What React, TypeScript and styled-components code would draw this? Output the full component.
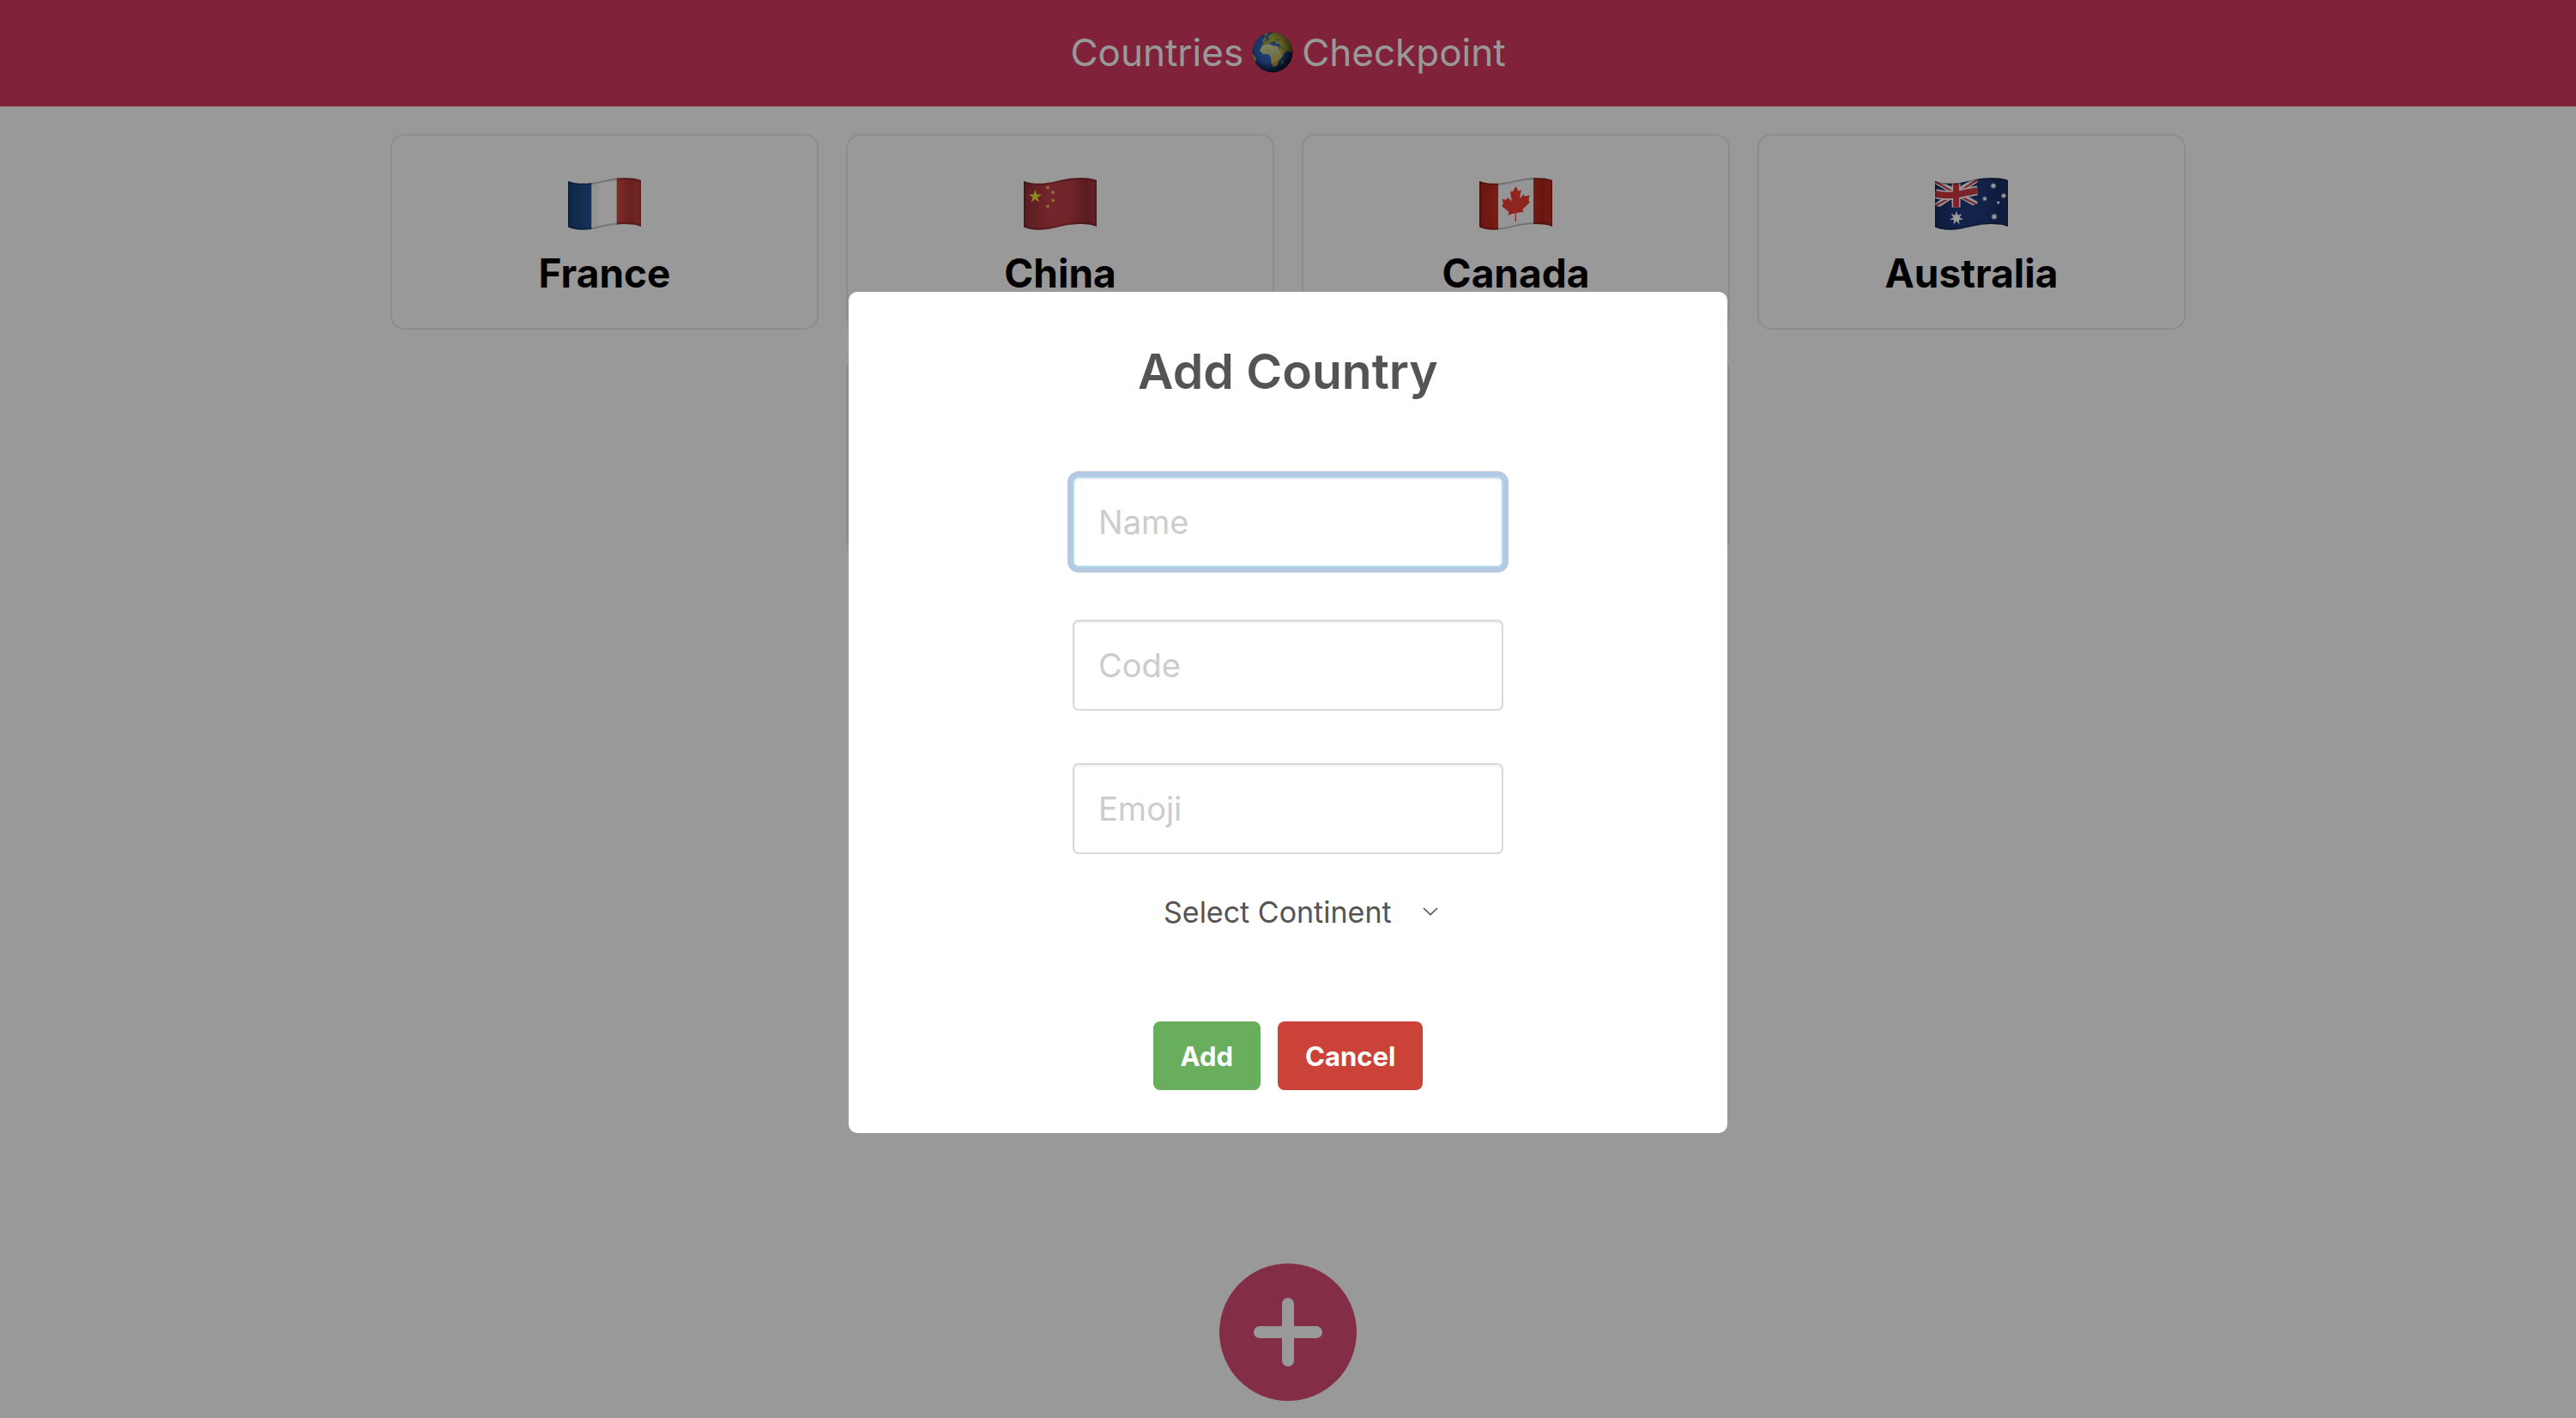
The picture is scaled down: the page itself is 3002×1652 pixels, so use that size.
import React from 'react';
import styled, { createGlobalStyle } from 'styled-components';

const GlobalStyle = createGlobalStyle`
  *, *::before, *::after { box-sizing: border-box; }
  body {
    margin: 0;
    background: #ffffff;
    color: #000000;
    font-family: Inter, "Liberation Sans", sans-serif;
  }
  h1, h2, p { margin: 0; }
  button, input, select { font-family: inherit; }
`;

const Page = styled.div`
  min-height: 100vh;
`;

const Header = styled.header`
  display: flex;
  justify-content: center;
  padding: 32px 0 34px;
  background: #d53961;
`;

const HeaderTitle = styled.h1`
  display: flex;
  align-items: center;
  gap: 10px;
  color: #ffffff;
  font-size: 44px;
  font-weight: 400;
  line-height: 58px;
`;

const CountryGrid = styled.main`
  display: grid;
  grid-template-columns: repeat(4, 1fr);
  gap: 32px;
  max-width: 2156px;
  margin: 0 auto;
  padding: 32px;
`;

const Card = styled.article`
  display: flex;
  flex-direction: column;
  align-items: center;
  padding: 32px 16px;
  border: 2px solid #e9e9e9;
  border-radius: 16px;
`;

const FlagBox = styled.div`
  display: flex;
  align-items: center;
  height: 96px;
`;

const CountryName = styled.h2`
  font-size: 46px;
  font-weight: 700;
  line-height: 64px;
`;

const DetailPanel = styled.section`
  grid-column: 2 / 4;
  min-height: 228px;
  border: 4px solid #e9e9e9;
  border-radius: 16px;
`;

const FloatingButton = styled.button`
  position: fixed;
  bottom: 20px;
  left: 50%;
  margin-left: -80px;
  display: grid;
  place-items: center;
  width: 160px;
  height: 160px;
  padding: 0;
  border: 0;
  border-radius: 50%;
  background: #dc4b76;
  color: #ffffff;
`;

const Overlay = styled.div`
  position: fixed;
  inset: 0;
  display: flex;
  align-items: center;
  justify-content: center;
  padding: 28px 20px 20px;
  background: rgba(0, 0, 0, 0.4);
`;

const Modal = styled.form`
  display: flex;
  flex-direction: column;
  align-items: center;
  width: 1024px;
  max-width: 100%;
  padding: 50px;
  border-radius: 10px;
  background: #ffffff;
  color: #545454;
`;

const ModalTitle = styled.h2`
  font-size: 57px;
  font-weight: 600;
  line-height: 86px;
`;

const Fields = styled.div`
  display: flex;
  flex-direction: column;
  gap: 61px;
  margin-top: 79px;
`;

const TextInput = styled.input`
  display: block;
  width: 502px;
  height: 106px;
  padding: 0 28px;
  border: 2px solid #d9d9d9;
  border-radius: 7px;
  outline: none;
  background: #ffffff;
  box-shadow: inset 0 2px 2px rgba(0, 0, 0, 0.06);
  color: #545454;
  font-size: 38px;

  &::placeholder {
    color: #cccccc;
    opacity: 1;
  }

  &:focus {
    border-color: #b4dbed;
    box-shadow: inset 0 2px 2px rgba(0, 0, 0, 0.06), 0 0 0 6px #b5c9e2;
  }
`;

const SelectWrap = styled.div`
  display: grid;
  align-items: center;
  margin-top: 27px;
  color: #545454;

  > * {
    grid-area: 1 / 1;
  }

  > svg {
    justify-self: end;
    margin-right: 10px;
    pointer-events: none;
  }
`;

const Select = styled.select`
  appearance: none;
  height: 80px;
  padding: 0 64px 0 40px;
  border: 0;
  background: transparent;
  color: inherit;
  font-size: 34px;
`;

const Actions = styled.div`
  display: flex;
  gap: 20px;
  margin-top: 88px;
`;

const ActionButton = styled.button<{ $color: string }>`
  height: 80px;
  padding: 0 32px;
  border: 0;
  border-radius: 8px;
  background: ${(p) => p.$color};
  color: #ffffff;
  font-size: 31px;
  font-weight: 700;
`;

const FLAG_SHAPE =
  'M0 4C8 7 17 7.6 28 6C42 4 50 .3 65 .3C73 .3 80 1 85 3V57C80 54.6 73 54 65 54C50 54 40 58 28 60C17 61.5 8 61 0 57.5Z';

function starPoints(cx: number, cy: number, outer: number, tips: number, ratio: number, turn = 0) {
  return Array.from({ length: tips * 2 }, (_, i) => {
    const r = i % 2 ? outer * ratio : outer;
    const a = (Math.PI * i) / tips - Math.PI / 2 + turn;
    return `${(cx + r * Math.cos(a)).toFixed(2)},${(cy + r * Math.sin(a)).toFixed(2)}`;
  }).join(' ');
}

function WavingFlag({ id, label, children }: { id: string; label: string; children: React.ReactNode }) {
  return (
    <svg width="86" height="62" viewBox="0 0 86 62" role="img" aria-label={label}>
      <defs>
        <clipPath id={`${id}-clip`}>
          <path d={FLAG_SHAPE} />
        </clipPath>
        <linearGradient id={`${id}-fold`}>
          <stop offset="0" stopColor="#000" stopOpacity=".22" />
          <stop offset=".35" stopColor="#000" stopOpacity="0" />
          <stop offset=".62" stopColor="#000" stopOpacity=".02" />
          <stop offset=".86" stopColor="#000" stopOpacity=".22" />
          <stop offset="1" stopColor="#000" stopOpacity=".08" />
        </linearGradient>
        <filter id={`${id}-soft`}>
          <feGaussianBlur stdDeviation="1" />
        </filter>
      </defs>
      <g clipPath={`url(#${id}-clip)`}>
        {children}
        <path d={FLAG_SHAPE} fill="none" stroke="#000" strokeOpacity=".5" strokeWidth="2" filter={`url(#${id}-soft)`} />
      </g>
    </svg>
  );
}

function Fold({ id }: { id: string }) {
  return <rect width="86" height="62" fill={`url(#${id}-fold)`} />;
}

function FranceFlag() {
  return (
    <WavingFlag id="fr" label="Flag of France">
      <rect width="27.5" height="62" fill="#25559a" />
      <rect x="56.5" width="30" height="62" fill="#dc4a43" />
      <Fold id="fr" />
      <rect x="27.5" width="29" height="62" fill="#ffffff" />
      <rect x="27.5" width="8" height="62" fill="#000" opacity=".03" />
    </WavingFlag>
  );
}

function ChinaFlag() {
  const small = [
    [28, 11.5],
    [34, 17],
    [34, 26.5],
    [28, 33.5],
  ];
  return (
    <WavingFlag id="cn" label="Flag of China">
      <rect width="86" height="62" fill="#c03e46" />
      <Fold id="cn" />
      <polygon points={starPoints(13.4, 22, 8, 5, 0.38)} fill="#eee03c" />
      {small.map(([x, y]) => (
        <polygon key={`${x}-${y}`} points={starPoints(x, y, 2.8, 5, 0.4, 0.3)} fill="#eee03c" />
      ))}
    </WavingFlag>
  );
}

function CanadaFlag() {
  return (
    <WavingFlag id="ca" label="Flag of Canada">
      <rect width="22" height="62" fill="#dc3226" />
      <rect x="63" width="23" height="62" fill="#dc3226" />
      <Fold id="ca" />
      <rect x="22" width="41" height="62" fill="#fafafa" />
      <path
        d="M42.4 10L39.3 15.7L35.8 16.3L37.9 27.3L32.7 23L31.7 25.7L26.5 25L27.9 30.3L25.8 32.7L34.4 40L33.4 43.7L41.7 41.3V51H43V41L51.3 40L50.6 36.7L58.9 28.7L57.5 26.3L58.5 20.3L52.7 21.7L51.7 19.3L46.8 24.7L48.9 14L45.5 15.7Z"
        fill="#ee3e34"
      />
    </WavingFlag>
  );
}

function AustraliaFlag() {
  const stars = [
    [68, 9.5, 4],
    [80, 21, 3.6],
    [58, 24.5, 3.2],
    [69, 45.5, 4.2],
  ];
  return (
    <WavingFlag id="au" label="Flag of Australia">
      <rect width="86" height="62" fill="#2f4a8e" />
      <rect width="86" height="62" fill="#0a1f66" opacity=".35" />
      <Fold id="au" />
      <clipPath id="au-canton">
        <path d="M0 3C8 7 17 7.6 28 5.5C38 4 44 2 49.5 0V30.5C42 33 34 34.6 24.5 34.6C15 35 7 34 0 33Z" />
      </clipPath>
      <g clipPath="url(#au-canton)">
        <path d="M-1 3L50 32M-1 34.5L50 1" stroke="#fff" strokeWidth="6.5" />
        <path d="M-1 4L22 17M28 21L50 32M-1 33.5L20 22M30 15L50 2" stroke="#d8404a" strokeWidth="2.2" />
        <path d="M0 18.5C8 21 17 21 27 19.5C36 17.5 43 16 50 15" fill="none" stroke="#fff" strokeWidth="11" />
        <path d="M24.6 0V36" stroke="#fff" strokeWidth="10" />
        <path d="M0 18.5C8 21 17 21 27 19.5C36 17.5 43 16 50 15" fill="none" stroke="#d33a45" strokeWidth="7.5" />
        <path d="M24.6 0V36" stroke="#d33a45" strokeWidth="7" />
      </g>
      <polygon points={starPoints(25, 47, 8.2, 7, 0.45)} fill="#fff" />
      {stars.map(([x, y, r]) => (
        <polygon key={`${x}-${y}`} points={starPoints(x, y, r, 7, 0.5)} fill="#fff" />
      ))}
      <polygon points={starPoints(73.7, 29, 2.3, 5, 0.5)} fill="#fff" />
    </WavingFlag>
  );
}

function Globe() {
  return (
    <svg width="48" height="48" viewBox="0 0 48 48" role="img" aria-label="Globe showing Europe and Africa">
      <defs>
        <radialGradient id="sea" cx=".42" cy=".42" r=".6">
          <stop offset="0" stopColor="#3f78c8" />
          <stop offset=".6" stopColor="#2b56a8" />
          <stop offset="1" stopColor="#122455" />
        </radialGradient>
        <radialGradient id="shade" cx=".4" cy=".42" r=".6">
          <stop offset=".55" stopColor="#000" stopOpacity="0" />
          <stop offset="1" stopColor="#000" stopOpacity=".6" />
        </radialGradient>
        <linearGradient id="land" x1="0" y1="0" x2=".3" y2="1">
          <stop offset="0" stopColor="#e6dca0" />
          <stop offset=".45" stopColor="#bcc98a" />
          <stop offset="1" stopColor="#c4a63e" />
        </linearGradient>
        <clipPath id="disc">
          <circle cx="24" cy="24" r="23.4" />
        </clipPath>
      </defs>
      <g clipPath="url(#disc)">
        <rect width="48" height="48" fill="url(#sea)" />
        <path d="M15 2L19 1L18 4L15 5ZM13 9L15 6L17 8L15 11L12 12ZM19 6L22 2L27 0L36 2L43 8L47 17L46 25L42 22L39 24L36 19L33 17L32 14L28 14L25 12L22 13L18 14L13 15L13 12L17 11L20 9Z" fill="#a8a238" />
        <path d="M23 12L26 11L28 13L26 14ZM28 8L32 9L30 11Z" fill="#2b56a8" />
        <path d="M12 16L19 14L24 16L30 17L33 23L37 26L35 30L31 34L30 39L26 41L24 40L22 34L22 29L19 26L13 26L9 22Z" fill="url(#land)" />
        <path d="M31 17L36 20L39 24L35 26L33 23Z" fill="#b89f3c" />
        <path d="M35 34L37 33L36 37L34 38Z" fill="#b89f3c" />
        <path d="M0 25L4 29L5 33L3 37L0 36Z" fill="#b8a83c" />
        <circle cx="24" cy="24" r="24" fill="url(#shade)" />
      </g>
    </svg>
  );
}

function PlusIcon() {
  return (
    <svg width="80" height="80" viewBox="0 0 80 80" aria-hidden="true">
      <path d="M40 7V73M7 40H73" stroke="currentColor" strokeWidth="14" strokeLinecap="round" />
    </svg>
  );
}

function ChevronIcon() {
  return (
    <svg width="18" height="10" viewBox="0 0 18 10" aria-hidden="true">
      <path d="M1 1L9 8.6L17 1" fill="none" stroke="currentColor" strokeWidth="1.7" />
    </svg>
  );
}

const countries = [
  { name: 'France', Flag: FranceFlag },
  { name: 'China', Flag: ChinaFlag },
  { name: 'Canada', Flag: CanadaFlag },
  { name: 'Australia', Flag: AustraliaFlag },
];

const fields = ['Name', 'Code', 'Emoji'];

export default function App() {
  return (
    <Page>
      <GlobalStyle />
      <Header>
        <HeaderTitle>
          <span>Countries</span>
          <Globe />
          <span>Checkpoint</span>
        </HeaderTitle>
      </Header>
      <CountryGrid>
        {countries.map(({ name, Flag }) => (
          <Card key={name}>
            <FlagBox>
              <Flag />
            </FlagBox>
            <CountryName>{name}</CountryName>
          </Card>
        ))}
        <DetailPanel />
      </CountryGrid>
      <FloatingButton type="button" aria-label="Add a country">
        <PlusIcon />
      </FloatingButton>
      <Overlay>
        <Modal role="dialog" aria-labelledby="dialog-title" onSubmit={(e) => e.preventDefault()}>
          <ModalTitle id="dialog-title">Add Country</ModalTitle>
          <Fields>
            {fields.map((field, i) => (
              <TextInput key={field} type="text" aria-label={field} placeholder={field} autoFocus={i === 0} />
            ))}
          </Fields>
          <SelectWrap>
            <Select aria-label="Select Continent" defaultValue="">
              <option value="">Select Continent</option>
              <option>Africa</option>
              <option>Asia</option>
              <option>Europe</option>
              <option>Oceania</option>
            </Select>
            <ChevronIcon />
          </SelectWrap>
          <Actions>
            <ActionButton type="submit" $color="#69ae5d">
              Add
            </ActionButton>
            <ActionButton type="button" $color="#cb4239">
              Cancel
            </ActionButton>
          </Actions>
        </Modal>
      </Overlay>
    </Page>
  );
}
